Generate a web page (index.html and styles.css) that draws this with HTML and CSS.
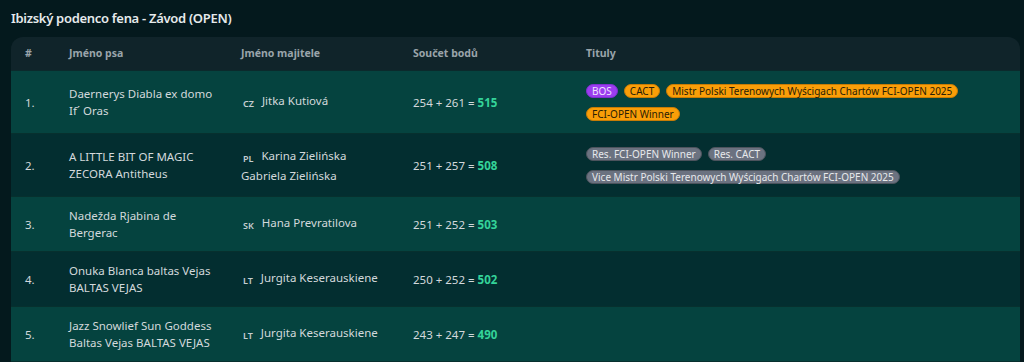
FILE: index.html
```html
<!DOCTYPE html>
<html lang="cs">
<head>
<meta charset="utf-8">
<link rel="stylesheet" href="styles.css">
</head>
<body>
<h2 class="title">Ibizský podenco fena - Závod (OPEN)</h2>
<div class="card">
<table class="results">
<colgroup><col class="c-rank"><col class="c-dog"><col class="c-owner"><col class="c-score"><col></colgroup>
<thead>
<tr><th>#</th><th>Jméno psa</th><th>Jméno majitele</th><th>Součet bodů</th><th>Tituly</th></tr>
</thead>
<tbody>
<tr class="odd">
<td>1.</td>
<td>Daernerys Diabla ex domo<br>Ifˊ Oras</td>
<td><span class="flag">CZ</span>Jitka Kutiová</td>
<td>254 + 261 = <b class="total">515</b></td>
<td><div class="badges"><span class="badge purple">BOS</span><span class="badge orange">CACT</span><span class="badge orange">Mistr Polski Terenowych Wyścigach Chartów FCI-OPEN 2025</span><span class="badge orange">FCI-OPEN Winner</span></div></td>
</tr>
<tr class="even">
<td>2.</td>
<td>A LITTLE BIT OF MAGIC<br>ZECORA Antitheus</td>
<td><span class="flag">PL</span>Karina Zielińska<br>Gabriela Zielińska</td>
<td>251 + 257 = <b class="total">508</b></td>
<td><div class="badges"><span class="badge gray">Res. FCI-OPEN Winner</span><span class="badge gray">Res. CACT</span><span class="badge gray">Vice Mistr Polski Terenowych Wyścigach Chartów FCI-OPEN 2025</span></div></td>
</tr>
<tr class="odd">
<td>3.</td>
<td>Nadežda Rjabina de<br>Bergerac</td>
<td><span class="flag">SK</span>Hana Prevratilova</td>
<td>251 + 252 = <b class="total">503</b></td>
<td></td>
</tr>
<tr class="even">
<td>4.</td>
<td>Onuka Blanca baltas Vejas<br>BALTAS VEJAS</td>
<td><span class="flag">LT</span>Jurgita Keserauskiene</td>
<td>250 + 252 = <b class="total">502</b></td>
<td></td>
</tr>
<tr class="odd">
<td>5.</td>
<td>Jazz Snowlief Sun Goddess<br>Baltas Vejas BALTAS VEJAS</td>
<td><span class="flag">LT</span>Jurgita Keserauskiene</td>
<td>243 + 247 = <b class="total">490</b></td>
<td></td>
</tr>
</tbody>
</table>
</div>
</body>
</html>
```
FILE: styles.css
```css
html, body {
  margin: 0;
  background: #04191d;
}
body {
  padding: 0 4px 0 11px;
  font-family: "Noto Sans", "Open Sans", sans-serif;
  color: #d3d9dc;
}
.title {
  margin: 0;
  padding: 8px 0 9px;
  font-size: 13px;
  line-height: 20px;
  font-weight: 600;
  letter-spacing: -0.3px;
  color: #e6eaec;
}
.card {
  border-radius: 12px 12px 0 0;
  overflow: hidden;
}
.results {
  width: 100%;
  border-collapse: collapse;
  table-layout: fixed;
  font-size: 11.5px;
  line-height: 17px;
}
.c-rank { width: 44px; }
.c-dog { width: 172px; }
.c-owner { width: 172px; }
.c-score { width: 173px; }
.results th {
  background: #10242a;
  color: #9aa4aa;
  font-size: 10.5px;
  font-weight: 700;
  text-align: left;
  height: 33px;
  padding: 0 0 0 14px;
  border-bottom: 1px solid #0b2a2c;
}
.results td {
  padding: 10px 0 10px 14px;
  vertical-align: middle;
  border-bottom: 1px solid #07302e;
}
tr.odd td { background: #05433f; }
tr.even td { background: #032e30; }
.flag {
  display: inline-block;
  font-size: 9px;
  font-weight: 600;
  color: #c5ced2;
  margin: 0 8px 0 2px;
  vertical-align: -2px;
}
.total {
  color: #34d399;
  font-weight: 700;
}
.badges {
  display: flex;
  flex-wrap: wrap;
  gap: 9px 6px;
  padding: 2.5px 0;
}
.badge {
  display: inline-flex;
  align-items: center;
  height: 14px;
  padding: 0 5px;
  border-radius: 8px;
  font-size: 10px;
  line-height: 14px;
  box-sizing: border-box;
}
.badge.purple {
  background: #9b3df0;
  color: #efe3ff;
  border: 1px solid #7e2fcf;
}
.badge.orange {
  background: #fa9e08;
  color: #2a1d06;
  border: 1px solid #c77c06;
}
.badge.gray {
  background: #6b7280;
  color: #e7e9ec;
  border: 1px solid #4c535d;
}
```
